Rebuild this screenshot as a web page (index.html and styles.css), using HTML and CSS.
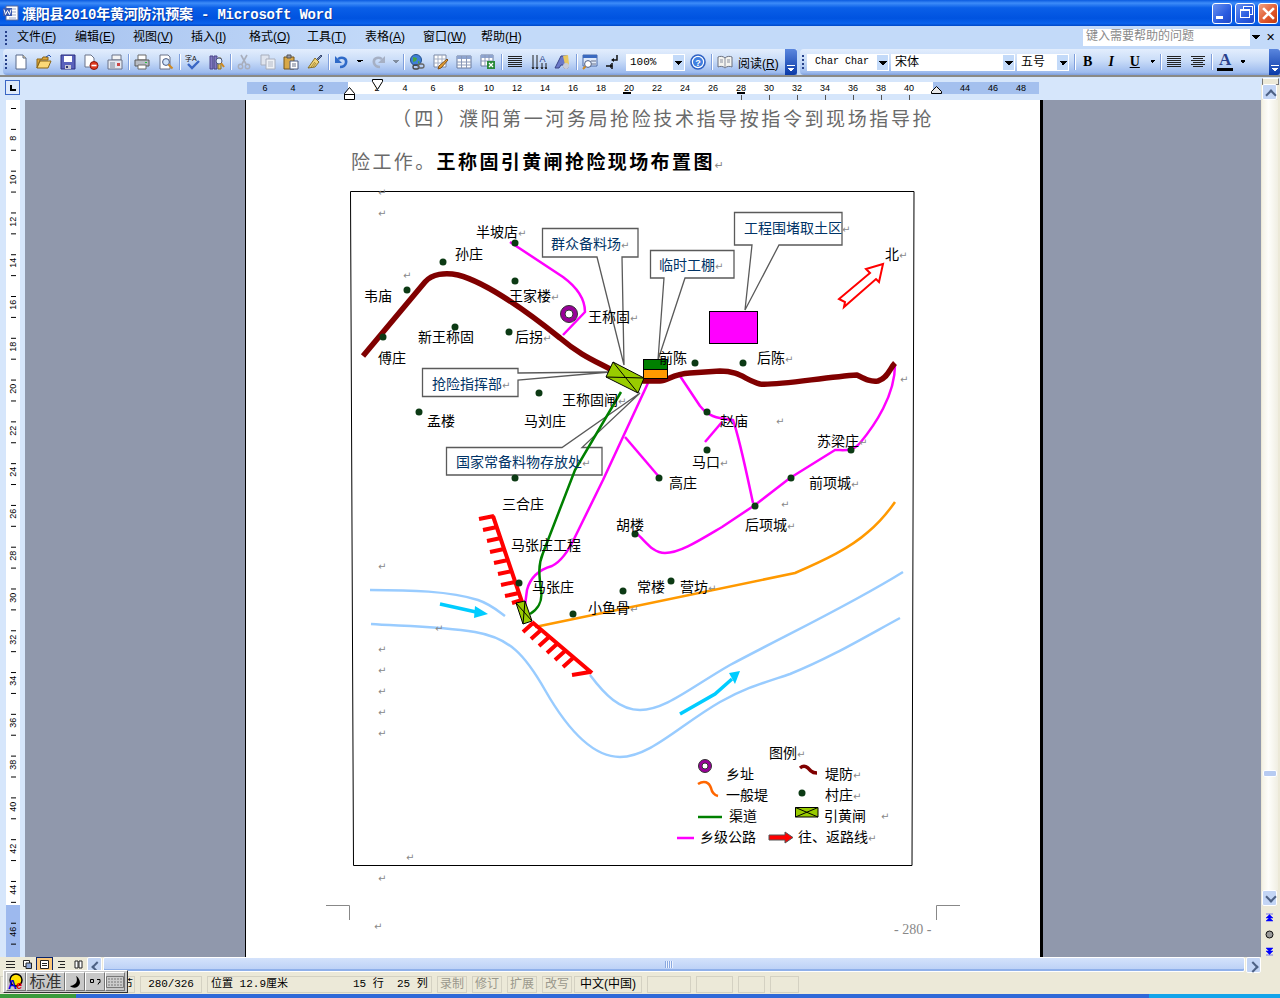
FILE: index.html
```html
<!DOCTYPE html>
<html lang="zh-CN">
<head>
    <meta charset="UTF-8">
    <title>濮阳县2010年黄河防汛预案 - Microsoft Word</title>
    <link rel="stylesheet" href="styles.css">
</head>
<body>
<svg class="icon-defs" width="0" height="0">
    <symbol id="i-new" viewBox="0 0 16 16"><path d="M3 1h7l3 3v11H3z" fill="#fff" stroke="#5a6a8a"/><path d="M10 1v3h3" fill="#f5dc9a" stroke="#5a6a8a"/></symbol>
    <symbol id="i-open" viewBox="0 0 16 16"><path d="M1 5h5l1-2h5v3H4L1 14z" fill="#e0a93c" stroke="#8a6414"/><path d="M4 7h11l-3 7H1z" fill="#fbd978" stroke="#8a6414"/><path d="M10 3l3-2 2 2" fill="none" stroke="#2a55b0"/></symbol>
    <symbol id="i-save" viewBox="0 0 16 16"><path d="M1 1h14v14H1z" fill="#5a62bc" stroke="#2c2f80"/><path d="M4 2h8v6H4z" fill="#fff"/><path d="M5 11h6v4H5z" fill="#c8c8d4"/><path d="M6 12h2v2H6z" fill="#30346c"/></symbol>
    <symbol id="i-perm" viewBox="0 0 16 16"><path d="M2 1h6l3 3v9H2z" fill="#fff" stroke="#6a7388"/><circle cx="11" cy="11.5" r="4" fill="#e03a20" stroke="#8a1a10"/><path d="M8.5 11.5h5" stroke="#fff" stroke-width="1.6"/></symbol>
    <symbol id="i-mail" viewBox="0 0 16 16"><path d="M5 1h9v5H5z" fill="#f4f4f4" stroke="#6a7388"/><path d="M1 6h14v9H1z" fill="#e4e8f0" stroke="#6a7388"/><path d="M3 9h5M3 11h5M3 13h5" stroke="#7a8496"/><path d="M10 9h3v3h-3z" fill="#c44"/></symbol>
    <symbol id="i-print" viewBox="0 0 16 16"><path d="M4 1h8v5H4z" fill="#fff" stroke="#6a6a6a"/><path d="M1 6h14v6H1z" fill="#b8bcc4" stroke="#5a5a5a"/><path d="M4 11h8v4H4z" fill="#fff" stroke="#6a6a6a"/><path d="M11 8h2v1h-2z" fill="#1fc23a"/></symbol>
    <symbol id="i-preview" viewBox="0 0 16 16"><path d="M2 1h8l2 2v12H2z" fill="#fff" stroke="#6a7388"/><circle cx="8" cy="8" r="3.4" fill="#cfe3fb" stroke="#4a5a80"/><path d="M10.5 10.5l4 4" stroke="#d08a20" stroke-width="2"/></symbol>
    <symbol id="i-research" viewBox="0 0 16 16"><path d="M1 2h3v13H1zM5 2h3v13H5z" fill="#8078c0" stroke="#4a4488"/><path d="M9 4h3v11H9z" fill="#e0c060" stroke="#86702a"/><circle cx="10" cy="7" r="3" fill="#e8f2ff" stroke="#4a5a80"/><path d="M12 9l3 4" stroke="#d08a20" stroke-width="2"/></symbol>
    <symbol id="i-cut" viewBox="0 0 16 16"><path d="M5 1l5 9M11 1l-5 9" stroke="#a8aebc" stroke-width="1.6"/><circle cx="4.5" cy="12.5" r="2.2" fill="none" stroke="#a8aebc" stroke-width="1.4"/><circle cx="11.5" cy="12.5" r="2.2" fill="none" stroke="#a8aebc" stroke-width="1.4"/></symbol>
    <symbol id="i-copy" viewBox="0 0 16 16"><path d="M1 1h8v10H1z" fill="#dfe4ee" stroke="#a8aebc"/><path d="M6 5h9v10H6z" fill="#eef1f6" stroke="#a8aebc"/><path d="M8 8h5M8 10h5M8 12h5" stroke="#b4bac6"/></symbol>
    <symbol id="i-paste" viewBox="0 0 16 16"><path d="M1 3h10v12H1z" fill="#d8a848" stroke="#76561a"/><path d="M4 1h4v3H4z" fill="#9a9aa4" stroke="#555"/><path d="M7 7h8v8H7z" fill="#fff" stroke="#4a5a80"/><path d="M9 10h4M9 12h4" stroke="#66708a"/></symbol>
    <symbol id="i-brush" viewBox="0 0 16 16"><path d="M9 6l5-5 1 1-5 5z" fill="#7a8eb8" stroke="#3a4a70"/><path d="M8 4l4 4-4 5-7 1z" fill="#f0d47a" stroke="#86702a"/><path d="M4 13l4-5M6 13l3-4" stroke="#a88a34"/></symbol>
    <symbol id="i-undo" viewBox="0 0 16 16"><path d="M4 5c5-3 9 0 8 4-.6 2.4-3 4-6 4" fill="none" stroke="#2f6ac8" stroke-width="2.6"/><path d="M1 2v7h7z" fill="#2f6ac8"/></symbol>
    <symbol id="i-redo" viewBox="0 0 16 16"><path d="M12 5C7 2 3 5 4 9c.6 2.4 3 4 6 4" fill="none" stroke="#a6b0c4" stroke-width="2.6"/><path d="M15 2v7H8z" fill="#a6b0c4"/></symbol>
    <symbol id="i-link" viewBox="0 0 16 16"><circle cx="7" cy="6" r="5.5" fill="#3f7fd8" stroke="#24508a"/><path d="M4 3l4 1-1 3-3 1zM9 7l2 1-2 2z" fill="#4aa83c"/><rect x="4" y="11" width="6" height="4" rx="2" fill="none" stroke="#444" stroke-width="1.3"/><rect x="9" y="10" width="6" height="4" rx="2" fill="none" stroke="#666" stroke-width="1.3"/></symbol>
    <symbol id="i-tables" viewBox="0 0 16 16"><path d="M1 1h12v12H1z" fill="#fff" stroke="#7a88a4"/><path d="M1 5h12M1 9h12M5 1v12M9 1v12" stroke="#a4aec2"/><path d="M14 5l1 1-7 8-3 1 1-3z" fill="#e8a030" stroke="#80501a"/></symbol>
    <symbol id="i-table" viewBox="0 0 16 16"><path d="M1 2h14v12H1z" fill="#fff" stroke="#6a7a9c"/><path d="M1 2h14v3H1z" fill="#8ea4cf"/><path d="M1 8h14M1 11h14M5.5 2v12M10.5 2v12" stroke="#8a98b6"/></symbol>
    <symbol id="i-excel" viewBox="0 0 16 16"><path d="M1 1h12v11H1z" fill="#fff" stroke="#6a7a9c"/><path d="M1 1h12v3H1z" fill="#8ea4cf"/><path d="M1 7h12M5 1v11M9 1v11" stroke="#8a98b6"/><path d="M7 7h8v8H7z" fill="#2a8a3a"/><path d="M9 9l4 4M13 9l-4 4" stroke="#fff" stroke-width="1.3"/></symbol>
    <symbol id="i-cols" viewBox="0 0 16 16"><path d="M1 2.500h14M1 4.500h14M1 6.500h14M1 8.500h14M1 10.500h14M1 12.500h14" stroke="#222"/></symbol>
    <symbol id="i-center" viewBox="0 0 16 16"><path d="M1 2.500h14M3 4.500h10M1 6.500h14M3 8.500h10M1 10.500h14M3 12.500h10" stroke="#222"/></symbol>
    <symbol id="i-wordart" viewBox="0 0 16 16"><path d="M1 14L7 2h6l1 12h-4V11H7l-2 3z" fill="#6a78c8" stroke="#3a4488"/><path d="M9 2l5-1 1 9-3 5z" fill="#e8c860"/><circle cx="12" cy="12" r="3" fill="#c8ccd8"/></symbol>
    <symbol id="i-docmap" viewBox="0 0 16 16"><path d="M1 1h14v11H1z" fill="#dfeafb" stroke="#4a6aa8"/><path d="M1 1h14v3H1z" fill="#3a6ac0"/><circle cx="6" cy="10" r="3.4" fill="#fff" stroke="#4a5a80"/><path d="M3.5 12.5L1 15" stroke="#d08a20" stroke-width="2"/><path d="M9 7h5M10 10h4" stroke="#66708a"/></symbol>
    <symbol id="i-para" viewBox="0 0 16 16"><path d="M12 1v5H7M1 12h6M7 9v6" fill="none" stroke="#111" stroke-width="1.5"/><path d="M9 4L6 6l3 2zM5 10l3 2-3 2z" fill="#111"/></symbol>
    <symbol id="i-book" viewBox="0 0 16 16"><path d="M8 4C6 2 3 2 1 3v10c2-1 5-1 7 1 2-2 5-2 7-1V3c-2-1-5-1-7 1z" fill="#f4f4f0" stroke="#6a7080"/><path d="M8 4v10M3 6h3M3 8h3M10 6h3M10 8h3" stroke="#8a90a0"/></symbol>
</svg>

<div class="window">
    <div class="title-bar">
        <svg class="word-icon" viewBox="0 0 16 16" width="16" height="16"><path d="M3 1h12v14H3z" fill="#fff" stroke="#5a6a9a"/><path d="M6 4h7M6 7h7M6 10h7M6 13h7" stroke="#9aa8c8"/><path d="M0 3h9v8H0z" fill="#3a5ab0"/><path d="M1 4.500l1.500 5 2-4 2 4 1.500-5" fill="none" stroke="#fff"/></svg>
        <span class="title-text">濮阳县2010年黄河防汛预案 - Microsoft Word</span>
        <div class="win-buttons">
            <div class="win-btn"><span class="win-min"></span></div>
            <div class="win-btn"><span class="win-restore"></span></div>
            <div class="win-btn win-close"><svg viewBox="0 0 12 12" width="13" height="13"><path d="M1 1l10 10M11 1L1 11" stroke="#fff" stroke-width="2.4"/></svg></div>
        </div>
    </div>

    <div class="menu-bar">
        <span class="grip"></span>
        <span class="menu-item">文件(<u>F</u>)</span>
        <span class="menu-item">编辑(<u>E</u>)</span>
        <span class="menu-item">视图(<u>V</u>)</span>
        <span class="menu-item">插入(<u>I</u>)</span>
        <span class="menu-item">格式(<u>O</u>)</span>
        <span class="menu-item">工具(<u>T</u>)</span>
        <span class="menu-item">表格(<u>A</u>)</span>
        <span class="menu-item">窗口(<u>W</u>)</span>
        <span class="menu-item">帮助(<u>H</u>)</span>
        <div class="help-box"><span class="help-text">键入需要帮助的问题</span><span class="combo-arrow"></span></div>
        <span class="doc-close">✕</span>
    </div>

    <div class="tool-row">
        <div class="toolbar toolbar-std">
            <span class="grip"></span>
            <span class="tb-btn"><svg><use href="#i-new"/></svg></span>
            <span class="tb-btn"><svg><use href="#i-open"/></svg></span>
            <span class="tb-btn"><svg><use href="#i-save"/></svg></span>
            <span class="tb-btn"><svg><use href="#i-perm"/></svg></span>
            <span class="tb-btn"><svg><use href="#i-mail"/></svg></span>
            <span class="tb-sep"></span>
            <span class="tb-btn"><svg><use href="#i-print"/></svg></span>
            <span class="tb-btn"><svg><use href="#i-preview"/></svg></span>
            <span class="tb-sep"></span>
            <span class="tb-btn"><svg viewBox="0 0 16 16"><text x="0" y="7" font-size="7" fill="#111">字A</text><path d="M3 10l4 4 7-7" fill="none" stroke="#3a66c4" stroke-width="2.4"/></svg></span>
            <span class="tb-btn"><svg><use href="#i-research"/></svg></span>
            <span class="tb-sep"></span>
            <span class="tb-btn"><svg><use href="#i-cut"/></svg></span>
            <span class="tb-btn"><svg><use href="#i-copy"/></svg></span>
            <span class="tb-btn"><svg><use href="#i-paste"/></svg></span>
            <span class="tb-btn"><svg><use href="#i-brush"/></svg></span>
            <span class="tb-sep"></span>
            <span class="tb-btn"><svg><use href="#i-undo"/></svg></span>
            <span class="tb-drop"></span>
            <span class="tb-btn"><svg><use href="#i-redo"/></svg></span>
            <span class="tb-drop tb-drop-off"></span>
            <span class="tb-sep"></span>
            <span class="tb-btn"><svg><use href="#i-link"/></svg></span>
            <span class="tb-btn"><svg><use href="#i-tables"/></svg></span>
            <span class="tb-btn"><svg><use href="#i-table"/></svg></span>
            <span class="tb-btn"><svg><use href="#i-excel"/></svg></span>
            <span class="tb-sep"></span>
            <span class="tb-btn"><svg><use href="#i-cols"/></svg></span>
            <span class="tb-btn"><svg viewBox="0 0 16 16"><path d="M2 1v14M6 1v14M11 9v6M15 9v6" stroke="#222"/><path d="M1 13l1 2 1-2M5 13l1 2 1-2M10 13l1 2 1-2M14 13l1 2 1-2" fill="none" stroke="#222"/><text x="8.500" y="8" font-size="9" fill="#2a3f8a">A</text></svg></span>
            <span class="tb-btn"><svg><use href="#i-wordart"/></svg></span>
            <span class="tb-sep"></span>
            <span class="tb-btn"><svg><use href="#i-docmap"/></svg></span>
            <span class="tb-btn"><svg><use href="#i-para"/></svg></span>
            <div class="combo combo-zoom"><span class="combo-text">100%</span><span class="combo-arrow"></span></div>
            <span class="tb-btn"><svg viewBox="0 0 16 16"><circle cx="8" cy="8" r="7" fill="#fff" stroke="#2f62c4" stroke-width="1.600"/><circle cx="8" cy="8" r="5" fill="#3f7fe0"/><text x="5.300" y="11.500" font-size="9" font-weight="700" fill="#fff">?</text></svg></span>
            <span class="tb-sep"></span>
            <span class="tb-btn"><svg><use href="#i-book"/></svg></span>
            <span class="tb-label">阅读(<u>R</u>)</span>
            <span class="chevron"></span>
        </div>
        <div class="toolbar toolbar-fmt">
            <span class="grip"></span>
            <div class="combo combo-style"><span class="combo-text">Char Char</span><span class="combo-arrow"></span></div>
            <div class="combo combo-font"><span class="combo-text combo-cjk">宋体</span><span class="combo-arrow"></span></div>
            <div class="combo combo-size"><span class="combo-text combo-cjk">五号</span><span class="combo-arrow"></span></div>
            <span class="tb-sep"></span>
            <span class="tb-btn fmt-b">B</span>
            <span class="tb-btn fmt-i">I</span>
            <span class="tb-btn fmt-u">U</span>
            <span class="tb-drop"></span>
            <span class="tb-sep"></span>
            <span class="tb-btn"><svg><use href="#i-cols"/></svg></span>
            <span class="tb-btn"><svg><use href="#i-center"/></svg></span>
            <span class="tb-sep"></span>
            <span class="tb-btn fmt-color">A</span>
            <span class="tb-drop"></span>
            <span class="chevron chevron-fmt"></span>
        </div>
    </div>

    <div class="ruler-row">
        <span class="tab-box"></span>
        <div class="h-ruler">
            <span>6</span><span>4</span><span>2</span><span></span>
            <span>2</span><span>4</span><span>6</span><span>8</span><span>10</span><span>12</span><span>14</span><span>16</span><span>18</span><span>20</span>
            <span>22</span><span>24</span><span>26</span><span class="tick">28</span><span class="tick">30</span><span class="tick">32</span><span class="tick">34</span><span class="tick">36</span><span class="tick">38</span><span class="tick">40</span>
            <span></span><span>44</span><span>46</span><span>48</span>
        </div>
        <svg class="marker marker-first" viewBox="0 0 11 11" width="11" height="11"><path d="M.5.5h10v2L5.5 10.5.5 2.500z" fill="#fff" stroke="#000"/></svg>
        <svg class="marker marker-hang" viewBox="0 0 11 13" width="11" height="13"><path d="M.5 6.500 5.500.5l5 6v6H.5zM.5 7.500h10" fill="#fff" stroke="#000"/></svg>
        <svg class="marker marker-right" viewBox="0 0 11 8" width="11" height="8"><path d="M.5 7.500v-2L5.500.5l5 5v2z" fill="#e8e8e8" stroke="#000"/></svg>
        <span class="tab-stop tab-20"></span>
        <span class="tab-stop tab-28"></span>
    </div>

    <div class="work-area">
        <div class="v-ruler">
            <div class="v-strip">
                <span>8</span><span>10</span><span>12</span><span>14</span><span>16</span><span>18</span><span>20</span><span>22</span><span>24</span><span>26</span>
                <span>28</span><span>30</span><span>32</span><span>34</span><span>36</span><span>38</span><span>40</span><span>42</span><span>44</span><span>46</span>
            </div>
        </div>
        <div class="doc-area">
            <div class="page">
                <p class="doc-line doc-line-first"><span class="doc-num">（四）</span>濮阳第一河务局抢险技术指导按指令到现场指导抢</p>
                <p class="doc-line doc-line-second">险工作。<b>王称固引黄闸抢险现场布置图</b><span class="ret-mark">↵</span></p>
                <svg class="diagram" viewBox="246 180 795 777" width="795" height="777">
                    <!-- frame -->
                    <path d="M350.500 191.500H914L912 865.500H353.500z" fill="none" stroke="#000"/>

                    <!-- callouts go under the lines -->
                    <path class="callout" d="M542.500 228.500H638V257H622L624 365L597 257H542.500z"/>
                    <path class="callout" d="M650.500 250.500H734V278H685L658 360L664 278H650.500z"/>
                    <path class="callout" d="M734.500 212.500H842V245H779L745 310L752 245H734.500z"/>
                    <path class="callout" d="M422.500 368.500H518V373L610 372L518 380V396.500H422.500z"/>
                    <path class="callout" d="M446.500 447.500H562L640 393L582 447.500H602V475H446.500z"/>

                    <!-- water -->
                    <g class="river">
                        <path d="M370 590C410 590 450 591 478 600C490 604 497 610 505 616"/>
                        <path d="M590 675C605 695 620 710 640 710C665 710 690 688 730 665C790 633 850 605 903 572"/>
                        <path d="M371 624C400 626 440 626 475 632C510 638 525 655 545 690C565 725 590 757 620 757C650 757 680 725 720 702C745 688 760 684 790 674C830 658 865 637 900 618"/>
                    </g>

                    <!-- roads -->
                    <g class="road">
                        <path d="M510 242L563 277C578 288 585 300 585 312L563 335"/>
                        <path d="M648 383L603 480L575 537C568 552 560 562 552 566C538 570 530 578 527 590L525 605"/>
                        <path d="M625 437L660 478"/>
                        <path d="M680 376L700 406C708 416 715 418 733 420C740 440 748 480 753 503"/>
                        <path d="M705 442L722 422"/>
                        <path d="M895 365C895 395 875 425 860 443C852 452 845 450 835 450L790 478L755 505L722 527C700 540 680 553 665 553C652 553 645 540 636 533"/>
                    </g>
                    <path class="canal" d="M621 392L575 470L543 553C538 565 539 575 541 590C543 602 537 610 530 614"/>
                    <path class="dyke" d="M535 627L795 573C825 560 850 548 868 532C880 522 888 512 895 502"/>

                    <!-- main levee -->
                    <path class="levee" d="M363 356L425 282C432 274 445 272 458 275C485 282 525 310 560 338C580 355 595 361 610 369L643 381H660C668 381 672 374 690 373L720 371C740 371 745 380 760 384C775 386 825 377 857 375C865 379 870 382 878 381C888 378 890 368 895 363"/>

                    <!-- hatched works -->
                    <g class="hatch">
                        <path d="M493 516L522 602M479 519L494 516M483 530L497 527M487 541L501 538M490 552L504 549M494 563L508 560M498 574L512 571M501 585L515 582M505 596L519 593M512 603L522 600"/>
                        <path d="M532 622L592 673M523 632L533 623M531 639L541 630M539 646L549 637M547 653L557 644M555 660L565 651M563 667L573 658M572 675L590 672"/>
                    </g>
                    <path class="flow" d="M440 604L476 612"/>
                    <path class="flow-head" d="M475 606L488 614L474 618z"/>
                    <path class="flow" d="M680 714L715 694L732 679"/>
                    <path class="flow-head" d="M729 673L740 671L735 684z"/>
                    <path class="north-arrow" d="M883 264L866 269L870 273L839 299L845 302L844 307L876 279L879 282z"/>

                    <!-- blocks -->
                    <rect class="borrow" x="709.500" y="311.500" width="48" height="32"/>
                    <rect x="643.500" y="359.500" width="24" height="10" fill="#008000" stroke="#000"/>
                    <rect x="643.500" y="369.500" width="24" height="9" fill="#ff9900" stroke="#000"/>
                    <path class="sluice" d="M613 362L644 378L638 393L606 377zM613 362L638 393M644 378L606 377"/>
                    <path class="sluice" d="M516 603L525 601L532 621L523 624zM516 603L532 621M525 601L523 624"/>

                    <!-- villages -->
                    <g class="village">
                        <circle cx="515" cy="243" r="3.500"/><circle cx="443" cy="262" r="3.500"/><circle cx="407" cy="290" r="3.500"/>
                        <circle cx="383" cy="337" r="3.500"/><circle cx="455" cy="327" r="3.500"/><circle cx="515" cy="281" r="3.500"/>
                        <circle cx="509" cy="332" r="3.500"/><circle cx="539" cy="393" r="3.500"/><circle cx="419" cy="412" r="3.500"/>
                        <circle cx="695" cy="363" r="3.500"/><circle cx="743" cy="363" r="3.500"/><circle cx="707" cy="412" r="3.500"/>
                        <circle cx="707" cy="450" r="3.500"/><circle cx="851" cy="450" r="3.500"/><circle cx="791" cy="478" r="3.500"/>
                        <circle cx="755" cy="506" r="3.500"/><circle cx="659" cy="478" r="3.500"/><circle cx="515" cy="478" r="3.500"/>
                        <circle cx="635" cy="534" r="3.500"/><circle cx="519" cy="583" r="3.500"/><circle cx="623" cy="591" r="3.500"/>
                        <circle cx="671" cy="581" r="3.500"/><circle cx="573" cy="614" r="3.500"/><circle cx="802" cy="793" r="3.500"/>
                    </g>
                    <circle cx="569" cy="314" r="8.500" fill="#990099" stroke="#333"/>
                    <circle cx="569" cy="314" r="4" fill="#fff" stroke="#333"/>

                    <g class="callout-text">
                        <text x="551" y="249">群众备料场<tspan class="ret">↵</tspan></text>
                        <text x="659" y="270">临时工棚<tspan class="ret">↵</tspan></text>
                        <text x="744" y="233">工程围堵取土区<tspan class="ret">↵</tspan></text>
                        <text x="432" y="389">抢险指挥部<tspan class="ret">↵</tspan></text>
                        <text x="456" y="467">国家常备料物存放处<tspan class="ret">↵</tspan></text>
                    </g>

                    <!-- place names -->
                    <g class="place">
                        <text x="476" y="237">半坡店<tspan class="ret">↵</tspan></text>
                        <text x="455" y="259">孙庄</text>
                        <text x="364" y="301">韦庙</text>
                        <text x="509" y="301">王家楼<tspan class="ret">↵</tspan></text>
                        <text x="588" y="322">王称固<tspan class="ret">↵</tspan></text>
                        <text x="418" y="342">新王称固</text>
                        <text x="515" y="342">后拐<tspan class="ret">↵</tspan></text>
                        <text x="378" y="363">傅庄</text>
                        <text x="659" y="363">前陈</text>
                        <text x="757" y="363">后陈<tspan class="ret">↵</tspan></text>
                        <text x="562" y="405">王称固闸<tspan class="ret">↵</tspan></text>
                        <text x="427" y="426">孟楼</text>
                        <text x="524" y="426">马刘庄</text>
                        <text x="720" y="426">赵庙</text>
                        <text x="817" y="446">苏梁庄<tspan class="ret">↵</tspan></text>
                        <text x="692" y="467">马口<tspan class="ret">↵</tspan></text>
                        <text x="669" y="488">高庄</text>
                        <text x="809" y="488">前项城<tspan class="ret">↵</tspan></text>
                        <text x="502" y="509">三合庄</text>
                        <text x="616" y="530">胡楼</text>
                        <text x="745" y="530">后项城<tspan class="ret">↵</tspan></text>
                        <text x="511" y="550">马张庄工程</text>
                        <text x="532" y="592">马张庄</text>
                        <text x="637" y="592">常楼</text>
                        <text x="680" y="592">营坊<tspan class="ret">↵</tspan></text>
                        <text x="588" y="613">小鱼骨<tspan class="ret">↵</tspan></text>
                        <text x="885" y="259">北<tspan class="ret">↵</tspan></text>
                    </g>

                    <!-- legend -->
                    <g class="place">
                        <text x="769" y="758">图例<tspan class="ret">↵</tspan></text>
                        <text x="726" y="779">乡址</text>
                        <text x="825" y="779">堤防<tspan class="ret">↵</tspan></text>
                        <text x="726" y="800">一般堤</text>
                        <text x="825" y="800">村庄<tspan class="ret">↵</tspan></text>
                        <text x="729" y="821">渠道</text>
                        <text x="824" y="821">引黄闸</text>
                        <text x="700" y="842">乡级公路</text>
                        <text x="798" y="842">往、返路线<tspan class="ret">↵</tspan></text>
                    </g>
                    <circle cx="705" cy="766" r="6.500" fill="#990099" stroke="#333"/>
                    <circle cx="705" cy="766" r="3" fill="#fff" stroke="#333"/>
                    <path d="M800 768C805 764 808 768 811 771C813 773 815 773 817 773" fill="none" stroke="#800000" stroke-width="3.500"/>
                    <path d="M698 784C704 780 709 782 711 788C712 793 714 795 718 796" fill="none" stroke="#ff6600" stroke-width="2.500"/>
                    <path d="M698 817H722" stroke="#008000" stroke-width="2.500"/>
                    <path class="sluice" d="M795.500 807.500H818V817H795.500zM795.500 807.500L818 817M818 807.500L795.500 817"/>
                    <path d="M677 838H694" stroke="#ff00ff" stroke-width="2.500"/>
                    <path d="M769 835H785V832L793 837.500L785 843V840H769z" fill="#ff0000" stroke="#555"/>

                    <!-- loose paragraph marks -->
                    <g class="ret-loose">
                        <text x="378" y="196">↵</text><text x="378" y="217">↵</text><text x="403" y="279">↵</text>
                        <text x="900" y="383">↵</text><text x="776" y="425">↵</text><text x="781" y="508">↵</text>
                        <text x="435" y="632">↵</text><text x="378" y="570">↵</text><text x="378" y="653">↵</text>
                        <text x="378" y="674">↵</text><text x="378" y="695">↵</text><text x="378" y="716">↵</text>
                        <text x="378" y="737">↵</text><text x="881" y="820">↵</text><text x="406" y="861">↵</text>
                        <text x="378" y="882">↵</text><text x="374" y="930">↵</text>
                    </g>

                    <!-- footer -->
                    <path class="crop" d="M326 905.500H349.500V920M936.500 920V905.500H960"/>
                    <text class="page-no" x="894" y="934">- 280 -</text>
                </svg>
            </div>
        </div>
        <div class="v-scroll">
            <span class="sb-btn sb-up"></span>
            <div class="sb-track"><span class="sb-thumb"></span></div>
            <span class="sb-btn sb-down"></span>
            <div class="browse">
                <svg viewBox="0 0 9 9" width="9" height="9"><path d="M1 1h7M4.500 1.500L8 5H1zM4.500 4.500L8 8H1z" fill="#0000ff" stroke="#0000ff" stroke-width=".5"/></svg>
                <svg viewBox="0 0 9 9" width="9" height="9"><circle cx="4.500" cy="4.500" r="3.500" fill="#999" stroke="#111"/></svg>
                <svg viewBox="0 0 9 9" width="9" height="9"><path d="M1 8h7M4.500 7.500L8 4H1zM4.500 4.500L8 1H1z" fill="#0000ff" stroke="#0000ff" stroke-width=".5"/></svg>
            </div>
        </div>
    </div>

    <div class="h-scroll-row">
        <span class="view-btn"><svg viewBox="0 0 9 9" width="9" height="9"><path d="M0 1.500h9M0 4.500h9M0 7.500h9" stroke="#222"/></svg></span>
        <span class="view-btn"><svg viewBox="0 0 9 9" width="9" height="9"><path d="M.5.500h6v6h-6z" fill="#fff" stroke="#222"/><path d="M3 3h5.500v5.500H3z" fill="#8fa8d8" stroke="#222"/></svg></span>
        <span class="view-btn view-active"><svg viewBox="0 0 9 9" width="9" height="9"><path d="M.5.500h8v8h-8z" fill="#fff" stroke="#222"/><path d="M2 3.500h5M2 5.500h5" stroke="#222"/></svg></span>
        <span class="view-btn"><svg viewBox="0 0 9 9" width="9" height="9"><path d="M1 1.500h7M3 4.500h5M1 7.500h7" stroke="#222"/></svg></span>
        <span class="view-btn"><svg viewBox="0 0 9 9" width="9" height="9"><path d="M1 1h3v7H1zM5 1h3v7H5z" fill="#fff" stroke="#222"/></svg></span>
        <span class="sb-btn sb-left"></span>
        <div class="h-track"><span class="h-grip"></span></div>
        <span class="sb-btn sb-right"></span>
    </div>

    <div class="status-bar">
        <span class="st-cell st-sec">1 节</span>
        <span class="st-cell st-page">280/326</span>
        <span class="st-cell st-pos"><span class="st-at">位置 12.9厘米</span><span class="st-line">15 行</span><span class="st-col">25 列</span></span>
        <span class="st-cell st-flag">录制</span>
        <span class="st-cell st-flag">修订</span>
        <span class="st-cell st-flag">扩展</span>
        <span class="st-cell st-flag">改写</span>
        <span class="st-cell st-lang">中文(中国)</span>
        <span class="st-cell st-e1"></span>
        <span class="st-cell st-e2"></span>
        <span class="st-cell st-e3"></span>
        <span class="st-cell st-e4"></span>
    </div>

    <div class="taskbar"><span class="start-btn"></span><span class="tray"></span></div>

    <div class="ime-bar">
        <span class="ime-cell ime-logo"><svg viewBox="0 0 18 18" width="18" height="18"><circle cx="9" cy="7" r="6" fill="#ffe000" stroke="#000" stroke-width="1.500"/><text x="1" y="16" font-size="12" font-weight="700" fill="#0000e0">A</text><text x="9" y="16" font-size="11" font-weight="700" fill="#e00000">e</text></svg></span>
        <span class="ime-cell ime-std">标准</span>
        <span class="ime-cell ime-moon"><svg viewBox="0 0 12 14" width="12" height="14"><path d="M7 1C9 5 8 10 1 11c3 3 9 2 10-3 0-3-2-6-4-7z" fill="#000"/></svg></span>
        <span class="ime-cell ime-dots"><svg viewBox="0 0 12 8" width="12" height="8"><path d="M1.500 1.500h3v3h-3zM8 1.500h3v3h-1l-1 2" fill="none" stroke="#000"/></svg></span>
        <span class="ime-cell ime-keys"><svg viewBox="0 0 18 12" width="18" height="12"><path d="M.5.500h17v11H.500z" fill="#ccc" stroke="#777"/><path d="M2 3h14M2 6h14M2 9h14" stroke="#777" stroke-dasharray="2 1"/></svg></span>
    </div>
</div>
</body>
</html>
```

FILE: styles.css
```css
* {
    box-sizing: border-box;
}

html, body {
    margin: 0;
    height: 998px;
    overflow: hidden;
}

body {
    font-family: "Liberation Sans", "Noto Sans CJK SC", sans-serif;
    font-size: 12px;
    color: #000;
}

.icon-defs {
    position: absolute;
}

.window {
    position: relative;
    width: 1280px;
    height: 998px;
    background: #ece9d8;
}

/* title bar */
.title-bar {
    display: flex;
    align-items: center;
    height: 26px;
    padding-left: 3px;
    background: linear-gradient(#0a5ae0, #3d8cf8 12%, #0a5fe8 30%, #0053e0 70%, #0a62ec 90%, #0048c8);
}

.word-icon {
    margin-right: 3px;
}

.title-text {
    font-family: "Liberation Mono", "Noto Sans CJK SC", monospace;
    font-size: 14px;
    font-weight: 700;
    letter-spacing: -.2px;
    color: #fff;
    white-space: pre;
    text-shadow: 1px 1px 0 #0a3aa0;
}

.win-buttons {
    display: flex;
    gap: 3px;
    margin-left: auto;
    margin-right: 2px;
}

.win-btn {
    display: flex;
    align-items: center;
    justify-content: center;
    position: relative;
    width: 20px;
    height: 21px;
    border: 1px solid #fff;
    border-radius: 3px;
    background: linear-gradient(135deg, #6a92f0, #2a5ce0 60%, #2048c8);
}

.win-close {
    background: linear-gradient(135deg, #f0a080, #e0562a 60%, #c03a10);
}

.win-min {
    width: 7px;
    height: 3px;
    margin: 8px 5px 0 0;
    background: #fff;
}

.win-restore {
    width: 10px;
    height: 9px;
    border: 1px solid #fff;
    border-top-width: 2px;
    box-shadow: 3px -3px 0 -1px #2a5ce0, 3px -3px 0 0 #fff;
}

/* menu */
.menu-bar {
    display: flex;
    align-items: center;
    height: 23px;
    padding-left: 5px;
    background: linear-gradient(90deg, #a4c0ee, #c3daf9 30%);
}

.grip {
    flex: none;
    width: 2px;
    height: 14px;
    margin-right: 3px;
    background: repeating-linear-gradient(#27418a 0 2px, transparent 2px 4px);
}

.menu-item {
    width: 58px;
    margin-top: -4px;
    white-space: nowrap;
}

.menu-bar .grip {
    margin-right: 10px;
}

.help-box {
    display: flex;
    align-items: stretch;
    width: 178px;
    height: 17px;
    margin-left: auto;
    background: #fff;
}

.help-text {
    flex: 1;
    padding-left: 3px;
    line-height: 15px;
    color: #8a8a8a;
}

.doc-close {
    width: 19px;
    text-align: center;
    font-family: "DejaVu Sans", sans-serif;
    font-size: 11px;
    font-weight: 700;
}

/* toolbars */
.tool-row {
    display: flex;
    height: 28px;
    padding-bottom: 2px;
    border-bottom: 2px solid #8a8a86;
    background: #c3daf9;
}

.toolbar {
    display: flex;
    align-items: center;
    height: 26px;
    padding-left: 2px;
    border-radius: 4px 0 0 4px;
    background: linear-gradient(#e3eefd, #c9dcf8 45%, #9dbbee 90%, #7f9fdc);
}

.toolbar-std {
    width: 794px;
    margin-left: 3px;
}

.toolbar-fmt {
    width: 480px;
    margin-left: 3px;
}

.toolbar .grip {
    margin-right: 2px;
}

.tb-btn {
    display: flex;
    flex: none;
    align-items: center;
    justify-content: center;
    width: 23.5px;
    height: 22px;
}

.tb-btn svg {
    width: 16px;
    height: 16px;
}

.tb-sep {
    flex: none;
    width: 1px;
    height: 16px;
    margin: 0 1.5px;
    background: #7f9fdc;
    box-shadow: 1px 0 0 #fff;
}

.tb-drop {
    flex: none;
    width: 12px;
    height: 8px;
    background: linear-gradient(45deg, transparent 50%, #000 50%) 3px 2px / 3px 3px no-repeat,
                linear-gradient(-45deg, transparent 50%, #000 50%) 6px 2px / 3px 3px no-repeat;
}

.tb-drop-off {
    opacity: .35;
}

.tb-label {
    flex: none;
    margin-left: 1px;
    white-space: nowrap;
}

.chevron {
    align-self: stretch;
    width: 12px;
    margin-left: auto;
    border-radius: 0 3px 3px 0;
    background: linear-gradient(45deg, transparent 50%, #fff 50%) 2px 19px / 4px 4px no-repeat,
                linear-gradient(-45deg, transparent 50%, #fff 50%) 6px 19px / 4px 4px no-repeat,
                linear-gradient(#fff, #fff) 2px 16px / 8px 1px no-repeat,
                linear-gradient(#5a86de, #0a3aa8);
}

.chevron-fmt {
    width: 11px;
}

.combo {
    display: flex;
    flex: none;
    align-items: stretch;
    height: 17px;
    border: 1px solid #fff;
    background: #fff;
}

.combo-text {
    flex: 1;
    padding-left: 3px;
    line-height: 14px;
    font-family: "Liberation Mono", monospace;
    font-size: 10px;
    overflow: hidden;
    white-space: nowrap;
}

.combo-cjk {
    font-family: "Liberation Sans", "Noto Sans CJK SC", sans-serif;
    font-size: 12px;
}

.combo-zoom {
    width: 59px;
    margin: 0 1px;
}

.combo-zoom .combo-text {
    font-size: 11px;
}

.combo-style {
    width: 82px;
    margin-left: 1px;
}

.combo-style .combo-text {
    padding-left: 7px;
}

.combo-font {
    width: 124px;
    margin-left: 2px;
}

.combo-size {
    width: 52px;
    margin-left: 2px;
    margin-right: 3px;
}

.combo-arrow {
    flex: none;
    width: 11px;
    background: linear-gradient(45deg, transparent 50%, #000 50%) 1.500px 6px / 4px 4px no-repeat,
                linear-gradient(-45deg, transparent 50%, #000 50%) 5.500px 6px / 4px 4px no-repeat,
                #c3daf9;
}

.fmt-b {
    font-family: "Liberation Serif", serif;
    font-size: 14px;
    font-weight: 700;
}

.fmt-i {
    font-family: "Liberation Serif", serif;
    font-size: 14px;
    font-weight: 700;
    font-style: italic;
}

.fmt-u {
    font-family: "Liberation Serif", serif;
    font-size: 14px;
    font-weight: 700;
    text-decoration: underline;
}

.fmt-color {
    align-items: flex-start;
    font-family: "Liberation Serif", serif;
    font-size: 17px;
    font-weight: 700;
    line-height: 18px;
    color: #2a3f8a;
    background: linear-gradient(#000, #000) center 17px / 16px 3px no-repeat;
}

/* rulers */
.ruler-row {
    position: relative;
    display: flex;
    height: 23px;
    background: #d6e6fb;
}

.tab-box {
    flex: none;
    width: 15px;
    height: 15px;
    margin: 3px 0 0 5px;
    border: 1px solid #3a66c4;
    background: linear-gradient(#000, #000) 4px 4px / 2px 6px no-repeat,
                linear-gradient(#000, #000) 4px 8px / 6px 2px no-repeat,
                #dfeafb;
}

.h-ruler {
    display: flex;
    width: 792px;
    height: 12px;
    margin: 5px 0 0 227px;
    padding-left: 4px;
    background: linear-gradient(90deg, #a4c0ee 101px, #fff 101px, #fff 686px, #a4c0ee 686px);
}

.h-ruler span {
    position: relative;
    flex: none;
    width: 28px;
    text-align: center;
    font-size: 9px;
    line-height: 12px;
}

.h-ruler .tick::after {
    content: "";
    position: absolute;
    left: 14px;
    top: 13px;
    width: 1px;
    height: 5px;
    background: #555;
}

.marker {
    position: absolute;
}

.marker-first {
    left: 372px;
    top: 2px;
}

.marker-hang {
    left: 344px;
    top: 10px;
}

.marker-right {
    left: 931px;
    top: 9px;
}

.tab-stop {
    position: absolute;
    top: 15px;
    width: 8px;
    height: 2px;
    background: #000;
}

.tab-20 {
    left: 623px;
}

.tab-28 {
    left: 737px;
}

/* document */
.work-area {
    display: flex;
    height: 857px;
}

.v-ruler {
    flex: none;
    width: 25px;
    padding-left: 6px;
    background: #d6e6fb;
}

.v-strip {
    display: flex;
    flex-direction: column;
    width: 14px;
    height: 857px;
    padding-top: 17px;
    background-image: linear-gradient(#000 1px, transparent 1px),
                      linear-gradient(#fff 805px, #9db9ee 805px);
    background-size: 5px 20.9px, auto;
    background-repeat: repeat-y, no-repeat;
    background-position: center 8px, 0 0;
}

.v-strip span {
    flex: none;
    height: 41.8px;
    line-height: 14px;
    text-align: center;
    font-size: 9px;
    writing-mode: vertical-rl;
    transform: rotate(180deg);
}

.doc-area {
    flex: 1;
    padding-left: 220px;
    background: #9098ac;
    overflow: hidden;
}

.page {
    width: 798px;
    height: 857px;
    border-left: 1px solid #000;
    border-right: 3px solid #000;
    background: #fff;
}

.doc-line {
    margin: 0;
    height: 36px;
    line-height: 36px;
    font-family: "Noto Sans CJK SC", sans-serif;
    font-size: 19px;
    letter-spacing: 2.4px;
    color: #6a6a6a;
    white-space: nowrap;
}

.doc-line-first {
    padding-left: 146px;
    letter-spacing: 2.6px;
}

.doc-num {
    letter-spacing: 3.3px;
}

.doc-line-second {
    margin-top: 7px;
    padding-left: 105px;
}

.doc-line-second b {
    color: #000;
}

.ret-mark {
    font-family: "DejaVu Sans", sans-serif;
    font-size: 11px;
    letter-spacing: 0;
    color: #888;
}

.diagram {
    display: block;
    margin-top: 1px;
    font-family: "Noto Sans CJK SC", sans-serif;
    font-size: 14px;
}

.river {
    fill: none;
    stroke: #99ccff;
    stroke-width: 2.5;
}

.road {
    fill: none;
    stroke: #ff00ff;
    stroke-width: 2.5;
    stroke-linejoin: round;
}

.canal {
    fill: none;
    stroke: #008000;
    stroke-width: 2.5;
}

.dyke {
    fill: none;
    stroke: #ff9900;
    stroke-width: 2.5;
}

.levee {
    fill: none;
    stroke: #800000;
    stroke-width: 5.5;
    stroke-linejoin: round;
}

.hatch {
    fill: none;
    stroke: #ff0000;
    stroke-width: 4;
}

.flow {
    fill: none;
    stroke: #00ccff;
    stroke-width: 3.5;
}

.flow-head {
    fill: #00ccff;
}

.north-arrow {
    fill: #fff;
    stroke: #ff0000;
    stroke-width: 2;
}

.borrow {
    fill: #ff00ff;
    stroke: #000;
}

.sluice {
    fill: #99cc00;
    stroke: #000;
}

.village {
    fill: #0c3a14;
}

.callout {
    fill: #fff;
    stroke: #5a5a5a;
    stroke-width: 1.3;
}

.callout-text {
    fill: #003366;
}

.ret, .ret-loose {
    font-family: "DejaVu Sans", sans-serif;
    font-size: 10px;
    fill: #888;
}

.crop {
    fill: none;
    stroke: #888;
}

.page-no {
    font-family: "Liberation Serif", serif;
    font-size: 14px;
    fill: #888;
}

/* scroll bars */
.v-scroll {
    display: flex;
    flex: none;
    flex-direction: column;
    width: 19px;
    padding: 0 2px 0 1px;
    margin-top: -16px;
    background: #ece9d8;
    position: relative;
}

.v-scroll::before {
    content: "";
    position: absolute;
    left: 1px;
    top: -6px;
    width: 15px;
    height: 5px;
    border: 1px solid #777;
    border-top-color: #fff;
    background: #ece9d8;
}

.sb-btn {
    display: block;
    flex: none;
    position: relative;
    width: 15px;
    height: 16px;
    border: 1px solid #fff;
    border-radius: 2px;
    background: #c3d5f5;
}

.sb-btn::after {
    content: "";
    position: absolute;
    left: 4px;
    top: 5px;
    width: 6px;
    height: 6px;
    border-left: 2px solid #4d6185;
    border-top: 2px solid #4d6185;
}

.sb-up::after {
    transform: rotate(45deg);
    top: 6px;
}

.sb-down::after {
    transform: rotate(225deg);
    top: 2px;
}

.sb-left::after {
    transform: rotate(-45deg);
    left: 5px;
}

.sb-right::after {
    transform: rotate(135deg);
    left: 2px;
}

.sb-track {
    flex: none;
    position: relative;
    height: 790px;
    background: linear-gradient(90deg, #f3f1e6, #fefefb 40%, #f0eee2);
}

.sb-thumb {
    position: absolute;
    left: 1px;
    top: 670px;
    width: 14px;
    height: 7px;
    border: 1px solid #fff;
    border-radius: 2px;
    background: #b7cbf2;
}

.browse {
    display: flex;
    flex-direction: column;
    align-items: center;
    gap: 8px;
    width: 15px;
    padding-top: 7px;
}

.h-scroll-row {
    display: flex;
    align-items: center;
    height: 16px;
    padding: 0 19px 1px 2px;
    position: relative;
}

.view-btn {
    display: flex;
    flex: none;
    align-items: center;
    justify-content: center;
    width: 17px;
    height: 15px;
}

.view-active {
    border: 1px solid #0a246a;
    background: #fbc77a;
}

.h-track {
    display: flex;
    flex: 1;
    align-items: center;
    justify-content: center;
    height: 15px;
    margin: 0 1px;
    border: 1px solid #fff;
    border-radius: 2px;
    background: linear-gradient(#d4e2fb, #b9cff6);
    box-shadow: inset 0 -2px 0 #8fb0ea;
}

.h-grip {
    width: 8px;
    height: 7px;
    margin-right: 10px;
    background: repeating-linear-gradient(90deg, #8aa8e0 0 1px, #eef4ff 1px 2px);
}

/* status */
.status-bar {
    display: flex;
    align-items: center;
    gap: 5px;
    height: 21px;
    padding-top: 2px;
    white-space: nowrap;
}

.st-cell {
    flex: none;
    height: 17px;
    line-height: 15px;
    border: 1px solid #d4d1c2;
    text-align: center;
}

.st-sec {
    width: 135px;
    text-align: right;
    padding-right: 1px;
    font-size: 11px;
}

.st-page {
    width: 62px;
    font-family: "Liberation Mono", monospace;
    font-size: 11px;
    letter-spacing: -.1px;
}

.st-pos {
    display: flex;
    width: 225px;
    padding-left: 3px;
    font-family: "Liberation Mono", "Noto Sans CJK SC", monospace;
    font-size: 11px;
}

.st-at {
    width: 142px;
    text-align: left;
}

.st-line {
    width: 44px;
    text-align: left;
}

.st-flag {
    width: 30px;
    color: #9a988c;
}

.st-lang {
    width: 68px;
    margin-left: -3px;
}

.st-e1 {
    width: 44px;
}

.st-e2 {
    width: 37px;
}

.st-e3 {
    width: 27px;
}

.st-e4 {
    width: 29px;
}

.taskbar {
    display: flex;
    justify-content: space-between;
    height: 4px;
    background: #2f69d8;
}

.start-btn {
    width: 76px;
    background: #3a9a3a;
}

.tray {
    width: 131px;
    background: #12a4ea;
}

/* floating input method bar */
.ime-bar {
    position: absolute;
    left: 3px;
    top: 970px;
    display: flex;
    width: 125px;
    height: 23px;
    padding: 1px 2px;
    background: #c8c8c8;
    border: 1px solid #fff;
    border-right-color: #333;
    border-bottom-color: #333;
}

.ime-cell {
    display: flex;
    flex: none;
    align-items: center;
    justify-content: center;
    height: 100%;
    border: 1px solid #fff;
    border-right-color: #777;
    border-bottom-color: #777;
    background: #c8c8c8;
}

.ime-logo {
    width: 20px;
}

.ime-std {
    width: 39px;
    font-size: 16px;
    line-height: 18px;
    color: #333;
    white-space: nowrap;
}

.ime-moon, .ime-dots {
    width: 20px;
}

.ime-keys {
    flex: 1;
}
```
